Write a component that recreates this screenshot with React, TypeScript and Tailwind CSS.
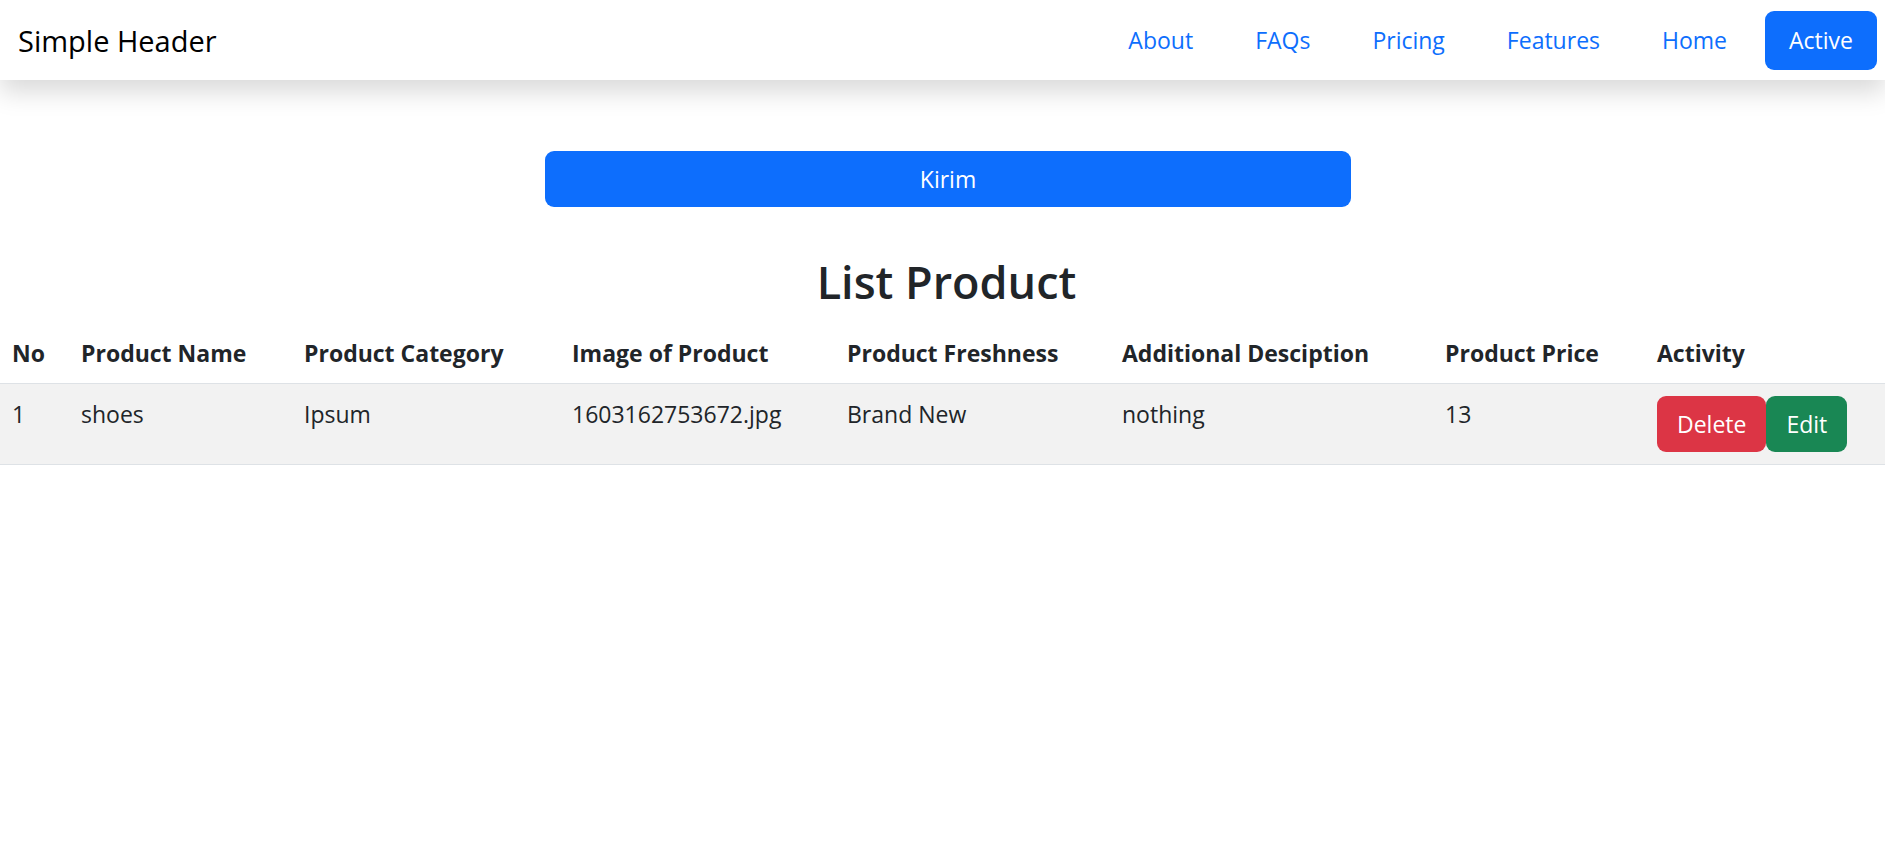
import { useState } from 'react'

type Product = {
  id: number
  name: string
  category: string
  image: string
  freshness: string
  description: string
  price: number
}

const navLinks = ['About', 'FAQs', 'Pricing', 'Features', 'Home']

const columns = [
  { label: 'No', width: 'w-[69px]' },
  { label: 'Product Name', width: 'w-[223px]' },
  { label: 'Product Category', width: 'w-[268px]' },
  { label: 'Image of Product', width: 'w-[275px]' },
  { label: 'Product Freshness', width: 'w-[275px]' },
  { label: 'Additional Desciption', width: 'w-[323px]' },
  { label: 'Product Price', width: 'w-[212px]' },
  { label: 'Activity', width: 'w-[240px]' },
]

export default function App() {
  const [products] = useState<Product[]>([
    {
      id: 1,
      name: 'shoes',
      category: 'Ipsum',
      image: '1603162753672.jpg',
      freshness: 'Brand New',
      description: 'nothing',
      price: 13,
    },
  ])

  return (
    <div className="min-h-screen bg-white text-[#212529] font-['Open_Sans','Noto_Sans',sans-serif]">
      <header className="h-[80px] flex items-center justify-between pl-[18px] pr-2 bg-white shadow-[0_12px_24px_rgba(0,0,0,0.15)] relative">
        <span className="text-[29px] leading-none text-black">Simple Header</span>
        <nav className="flex items-center gap-[14px]">
          {navLinks.map((link) => (
            <a key={link} href="#" className="px-6 py-3 text-[23px] leading-[35px] text-[#0d6efd]">
              {link}
            </a>
          ))}
          <a href="#" className="px-6 py-3 text-[23px] leading-[35px] text-white bg-[#0d6efd] rounded-[9px]">
            Active
          </a>
        </nav>
      </header>

      <main className="pt-[71px]">
        <div className="flex justify-center pl-[11px]">
          <button className="w-[806px] h-[56px] rounded-[9px] bg-[#0d6efd] text-white text-[23px]">
            Kirim
          </button>
        </div>

        <h2 className="mt-[46px] mb-[12px] pl-[8px] text-center text-[45px] leading-[58px] font-semibold">
          List Product
        </h2>

        <table className="w-full table-fixed border-collapse text-[23px]">
          <thead>
            <tr className="border-b border-[#dee2e6]">
              {columns.map((col) => (
                <th key={col.label} className={`${col.width} p-3 text-left font-bold leading-[36px] whitespace-nowrap`}>
                  {col.label}
                </th>
              ))}
            </tr>
          </thead>
          <tbody>
            {products.map((p, i) => (
              <tr key={p.id} className="bg-[#f2f2f2] border-b border-[#dee2e6] align-top">
                <td className="p-3 leading-[36px]">{i + 1}</td>
                <td className="p-3 leading-[36px]">{p.name}</td>
                <td className="p-3 leading-[36px]">{p.category}</td>
                <td className="p-3 leading-[36px]">{p.image}</td>
                <td className="p-3 leading-[36px]">{p.freshness}</td>
                <td className="p-3 leading-[36px]">{p.description}</td>
                <td className="p-3 leading-[36px]">{p.price}</td>
                <td className="p-3">
                  <div className="flex">
                    <button className="h-[56px] px-5 rounded-[9px] bg-[#dc3545] text-white leading-none">Delete</button>
                    <button className="h-[56px] px-5 rounded-[9px] bg-[#198754] text-white leading-none">Edit</button>
                  </div>
                </td>
              </tr>
            ))}
          </tbody>
        </table>
      </main>
    </div>
  )
}
